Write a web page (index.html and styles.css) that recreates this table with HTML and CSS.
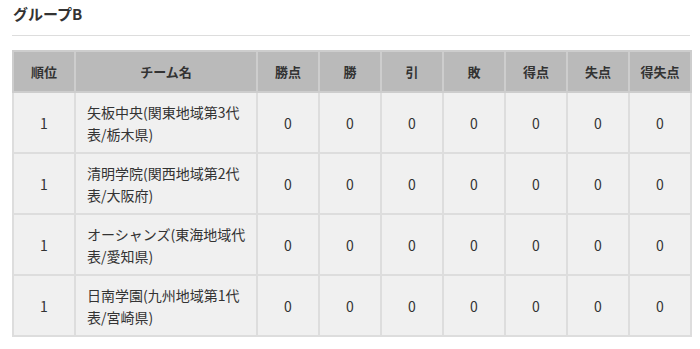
FILE: index.html
```html
<!DOCTYPE html>
<html lang="ja">
<head>
<meta charset="utf-8">
<title>グループB</title>
<link rel="stylesheet" href="styles.css">
</head>
<body>
<section class="group">
  <h2 class="group-title">グループB</h2>
  <table class="standings">
    <colgroup>
      <col class="c-rank">
      <col class="c-team">
      <col class="c-num"><col class="c-num"><col class="c-num"><col class="c-num"><col class="c-num"><col class="c-num"><col class="c-num">
    </colgroup>
    <thead>
      <tr>
        <th>順位</th><th>チーム名</th><th>勝点</th><th>勝</th><th>引</th><th>敗</th><th>得点</th><th>失点</th><th>得失点</th>
      </tr>
    </thead>
    <tbody>
      <tr>
        <td>1</td><td class="team">矢板中央(関東地域第3代表/栃木県)</td><td>0</td><td>0</td><td>0</td><td>0</td><td>0</td><td>0</td><td>0</td>
      </tr>
      <tr>
        <td>1</td><td class="team">清明学院(関西地域第2代表/大阪府)</td><td>0</td><td>0</td><td>0</td><td>0</td><td>0</td><td>0</td><td>0</td>
      </tr>
      <tr>
        <td>1</td><td class="team">オーシャンズ(東海地域代表/愛知県)</td><td>0</td><td>0</td><td>0</td><td>0</td><td>0</td><td>0</td><td>0</td>
      </tr>
      <tr>
        <td>1</td><td class="team">日南学園(九州地域第1代表/宮崎県)</td><td>0</td><td>0</td><td>0</td><td>0</td><td>0</td><td>0</td><td>0</td>
      </tr>
    </tbody>
  </table>
</section>
</body>
</html>
```
FILE: styles.css
```css
html, body {
  margin: 0;
  padding: 0;
  background: #fff;
}
body {
  font-family: "Noto Sans CJK JP", "Noto Sans", "Liberation Sans", sans-serif;
  color: #333;
}
.group {
  width: 678px;
  margin-left: 12px;
}
.group-title {
  margin: 0 0 14px 0;
  padding: 3px 0 10px 1px;
  font-size: 15px;
  line-height: 22px;
  font-weight: bold;
  color: #333;
  border-bottom: 1px solid #ddd;
}
.standings {
  width: 678px;
  table-layout: fixed;
  border-collapse: collapse;
  font-size: 14px;
}
.c-rank { width: 62px; }
.c-team { width: 182px; }
.c-num { width: 62px; }
.standings th,
.standings td {
  border: 2px solid #ddd;
  text-align: center;
  vertical-align: middle;
  padding: 0;
}
.standings th {
  background: #bababa;
  height: 39px;
  font-size: 13px;
  font-weight: bold;
  color: #333;
  border-color: #cdcdcd;
}
.standings td {
  background: #f0f0f0;
  height: 59px;
  line-height: 22px;
  color: #333;
}
.standings td.team {
  text-align: left;
  padding: 0 6px 0 11px;
}
```
